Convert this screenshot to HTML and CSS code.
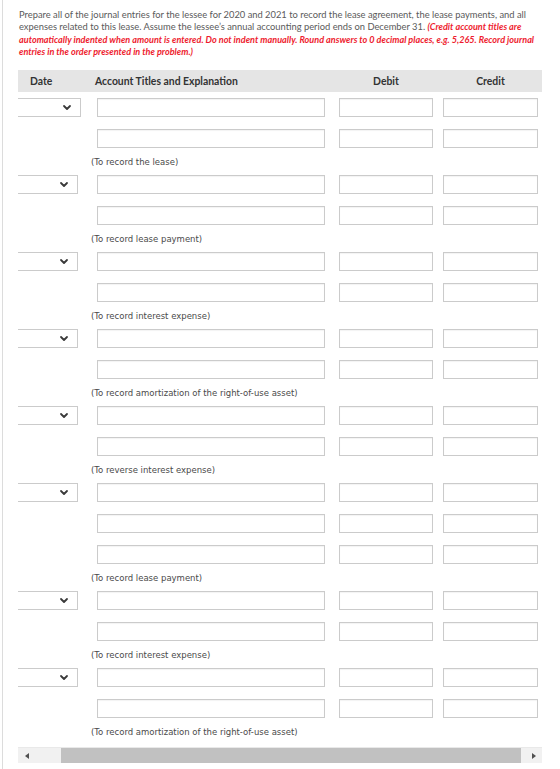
FILE: index.html
```html
<!DOCTYPE html>
<html lang="en">
<head>
<meta charset="utf-8">
<title>Journal entries – lessee</title>
<link rel="stylesheet" href="styles.css">
</head>
<body>
<div class="page">
  <p class="prompt">
    Prepare all of the journal entries for the lessee for 2020 and 2021 to record the lease agreement, the lease payments, and all<br>
    expenses related to this lease. Assume the lessee’s annual accounting period ends on December 31. <em class="note">(Credit account titles are<br>
    automatically indented when amount is entered. Do not indent manually. Round answers to 0 decimal places, e.g. 5,265. Record journal<br>
    entries in the order presented in the problem.)</em>
  </p>

  <div class="journal">
    <div class="row head">
      <div class="c-date">Date</div>
      <div class="c-acct">Account Titles and Explanation</div>
      <div class="c-debit">Debit</div>
      <div class="c-credit">Credit</div>
    </div>

    <!-- 2020 -->
    <div class="entry">
      <div class="row">
        <div class="c-date"><div class="select select--wide"><svg class="chev" viewBox="0 0 8 5"><polyline points="1,1 4,4 7,1"/></svg></div></div>
        <div class="c-acct"><div class="box"></div></div>
        <div class="c-debit"><div class="box"></div></div>
        <div class="c-credit"><div class="box"></div></div>
      </div>
      <div class="row">
        <div class="c-date"></div>
        <div class="c-acct"><div class="box"></div></div>
        <div class="c-debit"><div class="box"></div></div>
        <div class="c-credit"><div class="box"></div></div>
      </div>
      <p class="memo">(To record the lease)</p>
    </div>

    <div class="entry">
      <div class="row">
        <div class="c-date"><div class="select"><svg class="chev" viewBox="0 0 8 5"><polyline points="1,1 4,4 7,1"/></svg></div></div>
        <div class="c-acct"><div class="box"></div></div>
        <div class="c-debit"><div class="box"></div></div>
        <div class="c-credit"><div class="box"></div></div>
      </div>
      <div class="row">
        <div class="c-date"></div>
        <div class="c-acct"><div class="box"></div></div>
        <div class="c-debit"><div class="box"></div></div>
        <div class="c-credit"><div class="box"></div></div>
      </div>
      <p class="memo">(To record lease payment)</p>
    </div>

    <div class="entry">
      <div class="row">
        <div class="c-date"><div class="select"><svg class="chev" viewBox="0 0 8 5"><polyline points="1,1 4,4 7,1"/></svg></div></div>
        <div class="c-acct"><div class="box"></div></div>
        <div class="c-debit"><div class="box"></div></div>
        <div class="c-credit"><div class="box"></div></div>
      </div>
      <div class="row">
        <div class="c-date"></div>
        <div class="c-acct"><div class="box"></div></div>
        <div class="c-debit"><div class="box"></div></div>
        <div class="c-credit"><div class="box"></div></div>
      </div>
      <p class="memo">(To record interest expense)</p>
    </div>

    <div class="entry">
      <div class="row">
        <div class="c-date"><div class="select"><svg class="chev" viewBox="0 0 8 5"><polyline points="1,1 4,4 7,1"/></svg></div></div>
        <div class="c-acct"><div class="box"></div></div>
        <div class="c-debit"><div class="box"></div></div>
        <div class="c-credit"><div class="box"></div></div>
      </div>
      <div class="row">
        <div class="c-date"></div>
        <div class="c-acct"><div class="box"></div></div>
        <div class="c-debit"><div class="box"></div></div>
        <div class="c-credit"><div class="box"></div></div>
      </div>
      <p class="memo">(To record amortization of the right-of-use asset)</p>
    </div>

    <!-- 2021 -->
    <div class="entry">
      <div class="row">
        <div class="c-date"><div class="select"><svg class="chev" viewBox="0 0 8 5"><polyline points="1,1 4,4 7,1"/></svg></div></div>
        <div class="c-acct"><div class="box"></div></div>
        <div class="c-debit"><div class="box"></div></div>
        <div class="c-credit"><div class="box"></div></div>
      </div>
      <div class="row">
        <div class="c-date"></div>
        <div class="c-acct"><div class="box"></div></div>
        <div class="c-debit"><div class="box"></div></div>
        <div class="c-credit"><div class="box"></div></div>
      </div>
      <p class="memo">(To reverse interest expense)</p>
    </div>

    <div class="entry">
      <div class="row">
        <div class="c-date"><div class="select"><svg class="chev" viewBox="0 0 8 5"><polyline points="1,1 4,4 7,1"/></svg></div></div>
        <div class="c-acct"><div class="box"></div></div>
        <div class="c-debit"><div class="box"></div></div>
        <div class="c-credit"><div class="box"></div></div>
      </div>
      <div class="row">
        <div class="c-date"></div>
        <div class="c-acct"><div class="box"></div></div>
        <div class="c-debit"><div class="box"></div></div>
        <div class="c-credit"><div class="box"></div></div>
      </div>
      <div class="row">
        <div class="c-date"></div>
        <div class="c-acct"><div class="box"></div></div>
        <div class="c-debit"><div class="box"></div></div>
        <div class="c-credit"><div class="box"></div></div>
      </div>
      <p class="memo">(To record lease payment)</p>
    </div>

    <div class="entry">
      <div class="row">
        <div class="c-date"><div class="select"><svg class="chev" viewBox="0 0 8 5"><polyline points="1,1 4,4 7,1"/></svg></div></div>
        <div class="c-acct"><div class="box"></div></div>
        <div class="c-debit"><div class="box"></div></div>
        <div class="c-credit"><div class="box"></div></div>
      </div>
      <div class="row">
        <div class="c-date"></div>
        <div class="c-acct"><div class="box"></div></div>
        <div class="c-debit"><div class="box"></div></div>
        <div class="c-credit"><div class="box"></div></div>
      </div>
      <p class="memo">(To record interest expense)</p>
    </div>

    <div class="entry">
      <div class="row">
        <div class="c-date"><div class="select"><svg class="chev" viewBox="0 0 8 5"><polyline points="1,1 4,4 7,1"/></svg></div></div>
        <div class="c-acct"><div class="box"></div></div>
        <div class="c-debit"><div class="box"></div></div>
        <div class="c-credit"><div class="box"></div></div>
      </div>
      <div class="row">
        <div class="c-date"></div>
        <div class="c-acct"><div class="box"></div></div>
        <div class="c-debit"><div class="box"></div></div>
        <div class="c-credit"><div class="box"></div></div>
      </div>
      <p class="memo">(To record amortization of the right-of-use asset)</p>
    </div>
  </div>

  <div class="hscroll">
    <div class="hscroll__btn"><span class="tri tri--left"></span></div>
    <div class="hscroll__gap-l"></div>
    <div class="hscroll__thumb"></div>
    <div class="hscroll__gap-r"></div>
    <div class="hscroll__btn"><span class="tri tri--right"></span></div>
  </div>
</div>
</body>
</html>
```

FILE: styles.css
```css
html, body {
  margin: 0;
  padding: 0;
  background: #fff;
  overflow: hidden;
}

.page {
  margin-left: 2px;
  border-left: 1px solid #dcdcdc;
  height: 769px;
  box-sizing: border-box;
  padding: 9px 0 0 15px;
  font-family: Lato, "Open Sans", sans-serif;
  color: #555;
}

/* instructions */
.prompt {
  margin: 0 0 12px 1px;
  font-size: 9.35px;
  line-height: 12.3px;
  white-space: nowrap;
  color: #5a5a5a;
}
.note {
  color: #ee1b2e;
  font-weight: 700;
  font-style: italic;
  font-size: 9.1px;
}

/* journal grid */
.journal {
  width: 524px;
}
.row {
  display: flex;
  align-items: stretch;
  height: 19px;
  margin-bottom: 12px;
}
.entry .row:last-of-type {
  margin-bottom: 0;
}
.c-date { width: 63px; flex: none; }
.c-acct { width: 228px; margin-left: 16px; flex: none; }
.c-debit { width: 94px; margin-left: 14px; flex: none; }
.c-credit { width: 95px; margin-left: 10px; flex: none; }

.row.head {
  height: 22px;
  margin-bottom: 6px;
  background: #e5e5e5;
  align-items: center;
  font-weight: 700;
  font-size: 10.4px;
  color: #333;
}
.head .c-date { padding-left: 12px; box-sizing: border-box; }
.head .c-acct { text-indent: -2px; }
.head .c-debit, .head .c-credit { text-align: center; }

.box {
  height: 100%;
  box-sizing: border-box;
  border: 1px solid #cbcbcb;
  box-shadow: inset 0 1px 1px rgba(0, 0, 0, 0.05);
  background: #fff;
}

.select {
  width: 60px;
  height: 100%;
  box-sizing: border-box;
  border: 1px solid #cbcbcb;
  border-left: none;
  display: flex;
  align-items: center;
  justify-content: flex-end;
  padding-right: 9px;
  background: #fff;
}
.select--wide {
  width: 63px;
  padding-right: 9px;
}
.chev {
  width: 8px;
  height: 5px;
  overflow: visible;
}
.chev polyline {
  fill: none;
  stroke: #3a3a3a;
  stroke-width: 1.8;
  stroke-linecap: round;
  stroke-linejoin: round;
}

.memo {
  margin: 7px 0 6px 73px;
  font-family: "DejaVu Sans", Verdana, sans-serif;
  font-size: 8.5px;
  line-height: 14px;
  color: #4a4a4a;
}

/* horizontal scrollbar of the grid */
.hscroll {
  display: flex;
  width: 524px;
  height: 16px;
  margin-top: 8px;
  background: #f1f1f1;
  border-top: 1px solid #e9e9e9;
  box-sizing: border-box;
}
.hscroll__btn {
  width: 17px;
  display: flex;
  align-items: center;
  justify-content: center;
}
.hscroll__gap-l { width: 26px; }
.hscroll__gap-r { width: 4px; }
.hscroll__thumb {
  flex: 1;
  background: #c1c1c1;
}
.tri {
  width: 0;
  height: 0;
  border-top: 3.5px solid transparent;
  border-bottom: 3.5px solid transparent;
}
.tri--left { border-right: 4px solid #505050; }
.tri--right { border-left: 4px solid #505050; }
```
